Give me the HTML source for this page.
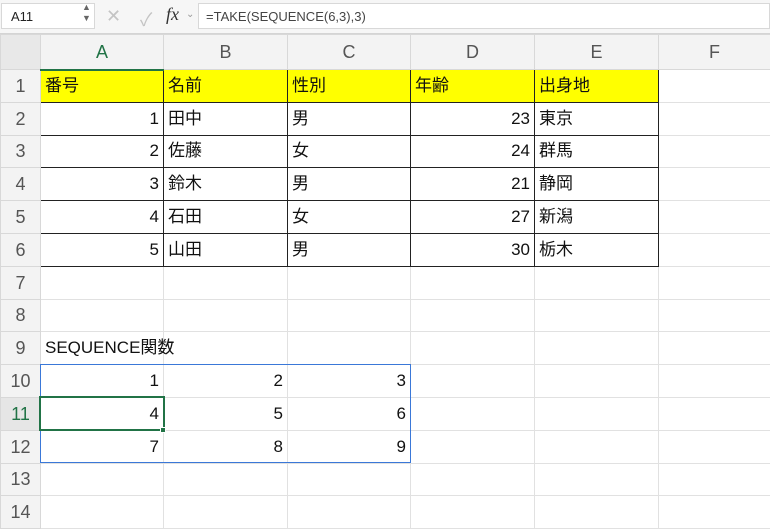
<!DOCTYPE html><html><head><meta charset="utf-8"><style>
*{margin:0;padding:0;box-sizing:border-box}
body{width:770px;height:518px;overflow:hidden;background:#fff;font-family:"Liberation Sans","Noto Sans CJK JP",sans-serif;position:relative}
.tb{position:absolute;left:0;top:0;width:770px;height:34px;background:#f6f6f6;border-bottom:1px solid #d4d4d4}
.nb{position:absolute;left:1px;top:3px;width:94px;height:26px;background:#fff;border:1px solid #d8d8d8;font-size:13px;padding:5px 9px;color:#222}
.fb{position:absolute;left:198px;top:3px;width:572px;height:26px;background:#fff;border:1px solid #d8d8d8;font-size:13px;padding:5px 7px;color:#444}
.g{position:absolute;font-size:18px}
table{position:absolute;left:0;top:34px;width:770px;border-collapse:collapse;table-layout:fixed}
td{height:32.8px;line-height:20px;vertical-align:middle;border:1px solid #e1e1e1;font-size:17px;padding:0 4px;white-space:nowrap;overflow:visible;color:#111}
td.h{background:#f3f3f3;color:#555;text-align:center;font-size:18px;border-color:#d8d8d8}
tr.ch td{height:35px}
.y{background:#ffff00}
.r{text-align:right}
.bk{border:1px solid #222}
</style></head><body>
<div class="tb">
<div class="nb">A11</div>
<div class="g" style="left:82px;top:2px;font-size:9px;color:#666;line-height:11px">▲<br>▼</div>
<div class="g" style="left:106px;top:6px;color:#c4c4c4">✕</div>
<div class="g" style="left:140px;top:6px;color:#c4c4c4">✓</div>
<div class="g" style="left:166px;top:4px;font-family:'Liberation Serif',serif;font-style:italic;color:#333">fx</div>
<div class="g" style="left:186px;top:9px;font-size:10px;color:#999">⌄</div>
<div class="fb">=TAKE(SEQUENCE(6,3),3)</div>
</div>
<table>
<colgroup><col style="width:40px"><col style="width:123px"><col style="width:124px"><col style="width:123px"><col style="width:124px"><col style="width:124px"><col style="width:112px"></colgroup>
<tr class="ch"><td class="h" style="background:#e8e8e8"></td><td class="h" style="color:#217346;border-bottom:2px solid #217346">A</td><td class="h">B</td><td class="h">C</td><td class="h">D</td><td class="h">E</td><td class="h">F</td></tr>
<tr><td class="h">1</td><td class="y bk">番号</td><td class="y bk">名前</td><td class="y bk">性別</td><td class="y bk">年齢</td><td class="y bk">出身地</td><td></td></tr>
<tr><td class="h">2</td><td class="r bk">1</td><td class="bk">田中</td><td class="bk">男</td><td class="r bk">23</td><td class="bk">東京</td><td></td></tr>
<tr><td class="h">3</td><td class="r bk">2</td><td class="bk">佐藤</td><td class="bk">女</td><td class="r bk">24</td><td class="bk">群馬</td><td></td></tr>
<tr><td class="h">4</td><td class="r bk">3</td><td class="bk">鈴木</td><td class="bk">男</td><td class="r bk">21</td><td class="bk">静岡</td><td></td></tr>
<tr><td class="h">5</td><td class="r bk">4</td><td class="bk">石田</td><td class="bk">女</td><td class="r bk">27</td><td class="bk">新潟</td><td></td></tr>
<tr><td class="h">6</td><td class="r bk">5</td><td class="bk">山田</td><td class="bk">男</td><td class="r bk">30</td><td class="bk">栃木</td><td></td></tr>
<tr><td class="h">7</td><td></td><td></td><td></td><td></td><td></td><td></td></tr>
<tr><td class="h">8</td><td></td><td></td><td></td><td></td><td></td><td></td></tr>
<tr><td class="h">9</td><td>SEQUENCE関数</td><td></td><td></td><td></td><td></td><td></td></tr>
<tr><td class="h">10</td><td class="r">1</td><td class="r">2</td><td class="r">3</td><td></td><td></td><td></td></tr>
<tr><td class="h" style="color:#217346;background:#e6e6e6">11</td><td class="r">4</td><td class="r">5</td><td class="r">6</td><td></td><td></td><td></td></tr>
<tr><td class="h">12</td><td class="r">7</td><td class="r">8</td><td class="r">9</td><td></td><td></td><td></td></tr>
<tr><td class="h">13</td><td></td><td></td><td></td><td></td><td></td><td></td></tr>
<tr><td class="h">14</td><td></td><td></td><td></td><td></td><td></td><td></td></tr>
</table>
<div style="position:absolute;left:40px;top:364px;width:371px;height:99px;border:1px solid #3a78d8"></div>
<div style="position:absolute;left:39px;top:396px;width:126px;height:35px;border:2px solid #217346"></div>
<div style="position:absolute;left:160px;top:427px;width:6px;height:6px;background:#217346;border:1px solid #fff"></div>
</body></html>
